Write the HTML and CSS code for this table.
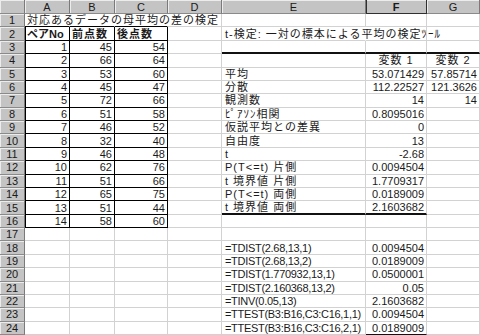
FILE: index.html
```html
<!DOCTYPE html>
<html lang="ja">
<head>
<meta charset="utf-8">
<title>対応あるデータの母平均の差の検定</title>
<link rel="stylesheet" href="styles.css">
</head>
<body>
<div class="sheet">
  <div class="row hdr">
    <div class="c h"></div><div class="c h">A</div><div class="c h">B</div><div class="c h">C</div><div class="c h">D</div><div class="c h">E</div><div class="c h act">F</div><div class="c h">G</div>
  </div>
  <div class="row">
    <div class="c h">1</div><div class="c nr bb jp">対応あるデータの母平均の差の検定</div><div class="c nr bb"></div><div class="c nr bb"></div><div class="c"></div><div class="c"></div><div class="c"></div><div class="c"></div>
  </div>
  <div class="row">
    <div class="c h">2</div><div class="c t tl bold">ペアNo</div><div class="c t bold jp">前点数</div><div class="c t bold jp">後点数</div><div class="c"></div><div class="c nr ind jp">t-検定: 一対の標本による平均の検定ﾂｰﾙ</div><div class="c"></div><div class="c"></div>
  </div>
  <div class="row">
    <div class="c h">3</div><div class="c t tl n">1</div><div class="c t n">45</div><div class="c t n">54</div><div class="c"></div><div class="c thick"></div><div class="c thick"></div><div class="c thick"></div>
  </div>
  <div class="row">
    <div class="c h">4</div><div class="c t tl n">2</div><div class="c t n">66</div><div class="c t n">64</div><div class="c"></div><div class="c"></div><div class="c m jp">変数 1</div><div class="c m jp">変数 2</div>
  </div>
  <div class="row">
    <div class="c h">5</div><div class="c t tl n">3</div><div class="c t n">53</div><div class="c t n">60</div><div class="c"></div><div class="c ind jp">平均</div><div class="c n">53.071429</div><div class="c n">57.85714</div>
  </div>
  <div class="row">
    <div class="c h">6</div><div class="c t tl n">4</div><div class="c t n">45</div><div class="c t n">47</div><div class="c"></div><div class="c ind jp">分散</div><div class="c n">112.22527</div><div class="c n">121.3626</div>
  </div>
  <div class="row">
    <div class="c h">7</div><div class="c t tl n">5</div><div class="c t n">72</div><div class="c t n">66</div><div class="c"></div><div class="c ind jp">観測数</div><div class="c n">14</div><div class="c n">14</div>
  </div>
  <div class="row">
    <div class="c h">8</div><div class="c t tl n">6</div><div class="c t n">51</div><div class="c t n">58</div><div class="c"></div><div class="c ind jp">ﾋﾟｱｿﾝ相関</div><div class="c n">0.8095016</div><div class="c"></div>
  </div>
  <div class="row">
    <div class="c h">9</div><div class="c t tl n">7</div><div class="c t n">46</div><div class="c t n">52</div><div class="c"></div><div class="c ind jp">仮説平均との差異</div><div class="c n">0</div><div class="c"></div>
  </div>
  <div class="row">
    <div class="c h">10</div><div class="c t tl n">8</div><div class="c t n">32</div><div class="c t n">40</div><div class="c"></div><div class="c ind jp">自由度</div><div class="c n">13</div><div class="c"></div>
  </div>
  <div class="row">
    <div class="c h">11</div><div class="c t tl n">9</div><div class="c t n">46</div><div class="c t n">48</div><div class="c"></div><div class="c ind">t</div><div class="c n">-2.68</div><div class="c"></div>
  </div>
  <div class="row">
    <div class="c h">12</div><div class="c t tl n">10</div><div class="c t n">62</div><div class="c t n">76</div><div class="c"></div><div class="c ind jp">P(T&lt;=t) 片側</div><div class="c n">0.0094504</div><div class="c"></div>
  </div>
  <div class="row">
    <div class="c h">13</div><div class="c t tl n">11</div><div class="c t n">51</div><div class="c t n">66</div><div class="c"></div><div class="c ind jp">t 境界値 片側</div><div class="c n">1.7709317</div><div class="c"></div>
  </div>
  <div class="row">
    <div class="c h">14</div><div class="c t tl n">12</div><div class="c t n">65</div><div class="c t n">75</div><div class="c"></div><div class="c ind jp">P(T&lt;=t) 両側</div><div class="c n">0.0189009</div><div class="c"></div>
  </div>
  <div class="row">
    <div class="c h">15</div><div class="c t tl n">13</div><div class="c t n">51</div><div class="c t n">44</div><div class="c"></div><div class="c ind jp endl">t 境界値 両側</div><div class="c n endl">2.1603682</div><div class="c"></div>
  </div>
  <div class="row">
    <div class="c h">16</div><div class="c t tl n">14</div><div class="c t n">58</div><div class="c t n">60</div><div class="c"></div><div class="c"></div><div class="c"></div><div class="c"></div>
  </div>
  <div class="row">
    <div class="c h">17</div><div class="c"></div><div class="c"></div><div class="c"></div><div class="c"></div><div class="c"></div><div class="c"></div><div class="c"></div>
  </div>
  <div class="row">
    <div class="c h">18</div><div class="c"></div><div class="c"></div><div class="c"></div><div class="c"></div><div class="c ind fx">=TDIST(2.68,13,1)</div><div class="c n">0.0094504</div><div class="c"></div>
  </div>
  <div class="row">
    <div class="c h">19</div><div class="c"></div><div class="c"></div><div class="c"></div><div class="c"></div><div class="c ind fx">=TDIST(2.68,13,2)</div><div class="c n">0.0189009</div><div class="c"></div>
  </div>
  <div class="row">
    <div class="c h">20</div><div class="c"></div><div class="c"></div><div class="c"></div><div class="c"></div><div class="c ind fx">=TDIST(1.770932,13,1)</div><div class="c n">0.0500001</div><div class="c"></div>
  </div>
  <div class="row">
    <div class="c h">21</div><div class="c"></div><div class="c"></div><div class="c"></div><div class="c"></div><div class="c ind fx">=TDIST(2.160368,13,2)</div><div class="c n">0.05</div><div class="c"></div>
  </div>
  <div class="row">
    <div class="c h">22</div><div class="c"></div><div class="c"></div><div class="c"></div><div class="c"></div><div class="c ind fx">=TINV(0.05,13)</div><div class="c n">2.1603682</div><div class="c"></div>
  </div>
  <div class="row">
    <div class="c h">23</div><div class="c"></div><div class="c"></div><div class="c"></div><div class="c"></div><div class="c ind fx">=TTEST(B3:B16,C3:C16,1,1)</div><div class="c n">0.0094504</div><div class="c"></div>
  </div>
  <div class="row">
    <div class="c h">24</div><div class="c"></div><div class="c"></div><div class="c"></div><div class="c"></div><div class="c ind fx">=TTEST(B3:B16,C3:C16,2,1)</div><div class="c n ul">0.0189009</div><div class="c"></div>
  </div>
</div>
</body>
</html>
```
FILE: styles.css
```css
html, body {
  margin: 0;
  padding: 0;
  background: #fff;
}
body {
  width: 480px;
  height: 335px;
  overflow: hidden;
  font-family: "Liberation Sans", "Noto Sans CJK JP", sans-serif;
  font-size: 11px;
  color: #1a1a1a;
}
.sheet {
  display: flex;
  flex-direction: column;
}
.row {
  display: grid;
  grid-template-columns: 25px 45px 45px 53px 54px 144px 61px 53px;
  height: 13.375px;
}
.row.hdr {
  height: 14px;
}
.c {
  box-sizing: border-box;
  border-right: 1px solid #d2d2d2;
  border-bottom: 1px solid #d2d2d2;
  padding: 0 2px;
  white-space: nowrap;
  line-height: 12px;
  display: flex;
  align-items: center;
  overflow: visible;
  min-width: 0;
}
.h {
  background: #c4c4c4;
  border-right: 1px solid #7a7a7a;
  border-bottom: 1px solid #8a8a8a;
  box-shadow: inset 1px 1px 0 #ececec;
  justify-content: center;
  color: #1a1a1a;
  padding: 0;
}
.h.act {
  font-weight: bold;
  border-right: 1px solid #303030;
  border-bottom: 1px solid #303030;
  box-shadow: inset 1px 0 0 #303030, inset 0 1px 0 #ececec;
}
.jp {
  letter-spacing: 1px;
}
.fx {
  letter-spacing: -0.3px;
}
.nr {
  border-right-color: transparent;
}
.bb {
  border-bottom-color: #000;
}
.t {
  border-right-color: #000;
  border-bottom-color: #000;
}
.tl {
  box-shadow: inset 1px 0 0 #000;
}
.bold {
  font-weight: bold;
}
.n {
  justify-content: flex-end;
}
.m {
  justify-content: center;
}
.ind {
  padding-left: 3px;
}
.thick {
  border-bottom: 2px solid #111;
}
.endl {
  border-bottom: 2px solid #111;
}
.ul {
  border-bottom: 1px solid #111;
}
```
